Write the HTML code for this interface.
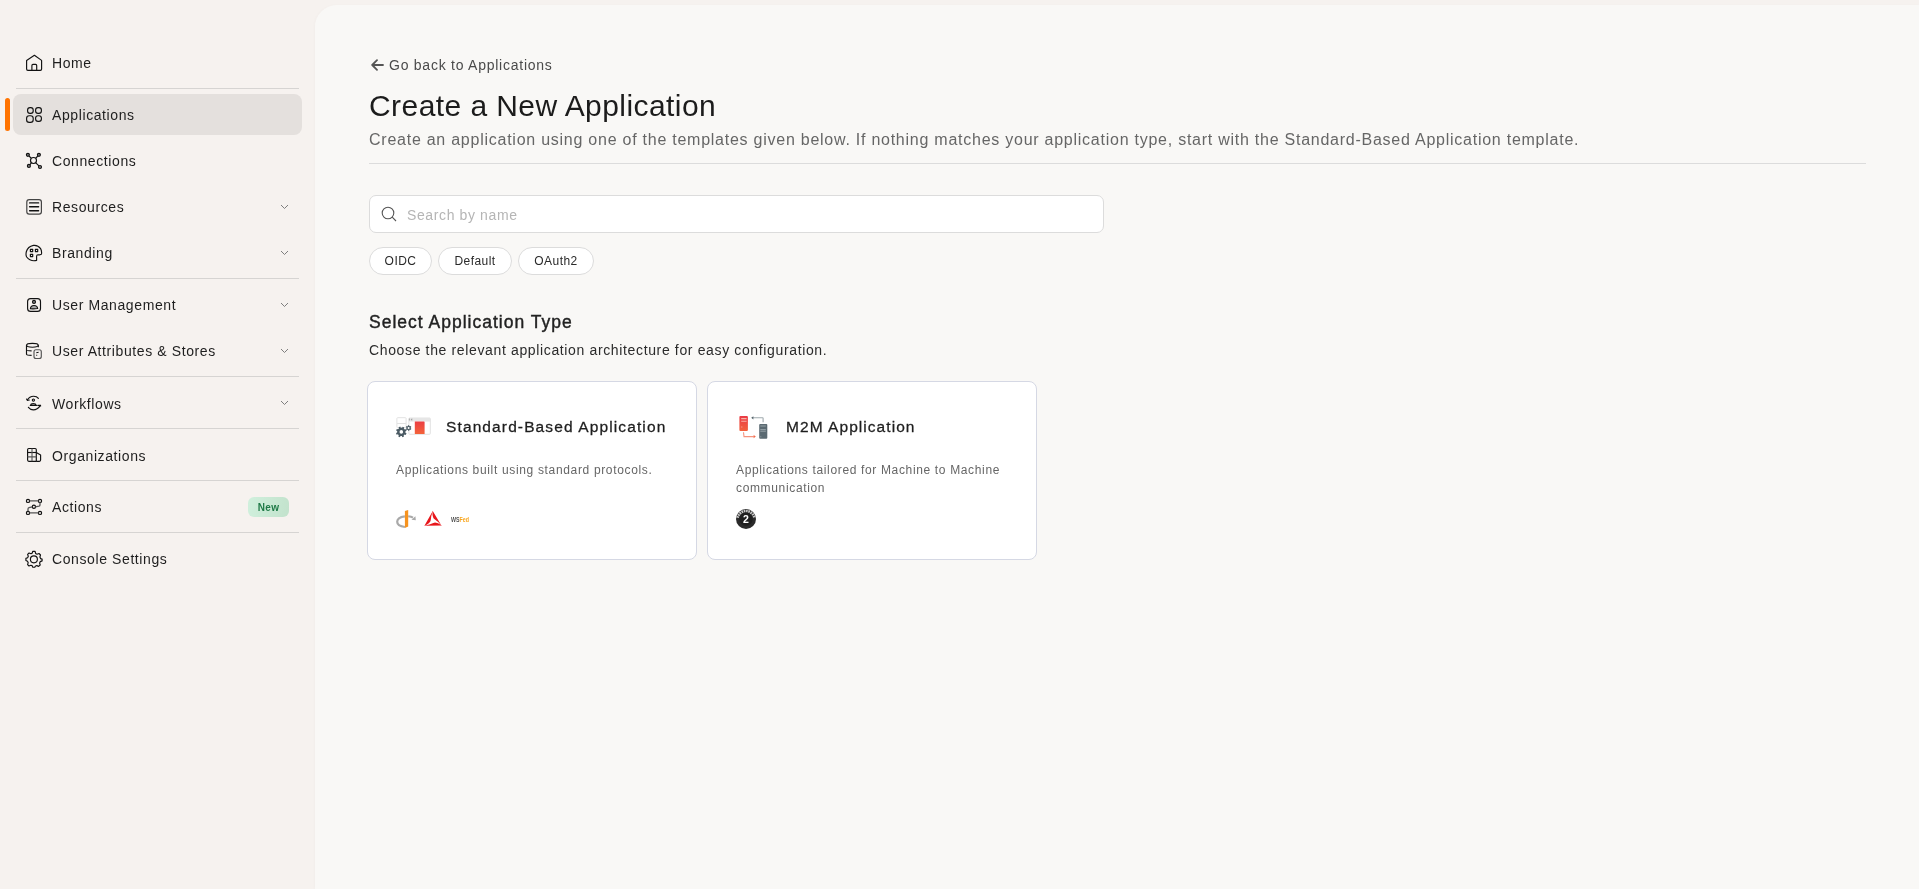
<!DOCTYPE html>
<html>
<head>
<meta charset="utf-8">
<style>
*{box-sizing:border-box;margin:0;padding:0}
html,body{width:1919px;height:889px;overflow:hidden}
body{background:#f6f2ef;font-family:"Liberation Sans",sans-serif;color:#1e1e1e;position:relative}
.abs{position:absolute;white-space:nowrap}
.t{position:absolute;white-space:nowrap;line-height:1}
/* sidebar */
.sel{position:absolute;left:13px;top:94px;width:289px;height:41px;border-radius:8px;background:#e4e0dd}
.bar{position:absolute;left:5px;top:98px;width:5px;height:33px;border-radius:3px;background:#ff7300}
.ico{position:absolute;left:22px;width:24px;height:24px}
.lbl{position:absolute;left:52px;font-size:14px;letter-spacing:0.6px;color:#1e1e1e;line-height:16px;white-space:nowrap}
.chev{position:absolute;left:280px;width:9px;height:6px}
.dv{position:absolute;left:16px;width:283px;height:1px;background:#d6d4d2}
.badge{position:absolute;left:248px;top:497px;width:41px;height:20px;border-radius:6px;background:linear-gradient(100deg,#d0f0dd,#c2e2cc);color:#1f7a47;font-weight:bold;font-size:10px;line-height:22.5px;text-align:center;letter-spacing:0.25px}
/* main */
.main{position:absolute;left:315px;top:5px;width:1604px;height:884px;background:#f9f8f6;border-top-left-radius:22px;box-shadow:-1px 0 3px rgba(0,0,0,0.02)}
.search{position:absolute;left:369px;top:195px;width:735px;height:38px;border:1px solid #dcdcdc;border-radius:7px;background:#fff}
.chip{position:absolute;top:247px;height:28px;border:1px solid #dcdcdc;border-radius:14px;background:#fff;font-size:12px;line-height:26px;text-align:center;color:#2a2a2a;letter-spacing:0.45px}
.card{position:absolute;top:381px;width:330px;height:179px;border:1px solid #d5d8e4;border-radius:8px;background:#fff}
</style>
</head>
<body>
<div id="wrap" style="position:absolute;left:0;top:0;width:1919px;height:889px;will-change:transform">
<!-- SIDEBAR -->
<svg class="ico" style="top:50px" viewBox="0 0 24 24" fill="none" stroke="#111" stroke-width="1.15" stroke-linejoin="round"><path d="M4.6 10.4L12.4 5.3L19.6 10.4V19Q19.6 20.3 18.3 20.3H5.9Q4.6 20.3 4.6 19Z"/><path d="M9.9 20.3V15.4Q9.9 14.3 11 14.3H13.6Q14.7 14.3 14.7 15.4V20.3"/></svg>
<div class="lbl" style="top:55px">Home</div>
<div class="dv" style="top:88px"></div>

<div class="sel"></div>
<div class="bar"></div>
<svg class="ico" style="top:103px" viewBox="0 0 24 24" fill="none" stroke="#111" stroke-width="1.15"><rect x="5.6" y="4.6" width="5.6" height="5.7" rx="2.4"/><rect x="13.6" y="4.6" width="5.8" height="5.7" rx="2.4"/><rect x="4.6" y="12.7" width="6.6" height="6.6" rx="2.6"/><rect x="13.6" y="12.7" width="5.8" height="5.7" rx="2.4"/></svg>
<div class="lbl" style="top:107px">Applications</div>

<svg class="ico" style="top:149px" viewBox="0 0 24 24" fill="none" stroke="#111" stroke-width="1.15"><circle cx="5.9" cy="5.8" r="1.5" fill="#888"/><circle cx="16.9" cy="5.8" r="1.5" fill="#888"/><circle cx="6.9" cy="16.9" r="1.5" fill="#888"/><circle cx="18" cy="18" r="1.5" fill="#888"/><circle cx="11.5" cy="11.5" r="3"/><path d="M7 7L9.4 9.4M15.8 7L13.6 9.4M8 15.8L9.4 13.6M16.9 16.9L13.6 13.6"/></svg>
<div class="lbl" style="top:153px">Connections</div>

<svg class="ico" style="top:195px" viewBox="0 0 24 24" fill="none" stroke="#111" stroke-width="1.1"><rect x="4.8" y="4.6" width="14.6" height="14.6" rx="2.4" stroke="#444" stroke-width="1.2"/><path d="M7.6 7.9H16.6M7.6 11.8H16.6M7.6 15.7H16.6" stroke-width="1.4" stroke-linecap="round"/></svg>
<div class="lbl" style="top:199px">Resources</div>
<svg class="chev" style="top:204px" viewBox="0 0 9 6" fill="none" stroke="#777" stroke-width="0.95"><path d="M1 1L4.5 4.5L8 1"/></svg>

<svg class="ico" style="top:241px" viewBox="0 0 24 24" fill="none" stroke="#111" stroke-width="1.15" stroke-linejoin="round"><path d="M14.6 19.4Q13.2 19.7 12 19.7Q7.5 19.7 4.7 16Q3.5 14 4.4 10.5Q5.7 5.8 11.5 4.4Q16 3.9 18.6 7.6Q19.9 9.8 19.5 12.9Q19.3 13.7 17.8 13.8H15.9Q14.6 13.9 14.6 15.2Z"/><rect x="8.4" y="8.3" width="2.3" height="2.3" stroke-width="1.2"/><rect x="13.4" y="8.3" width="2.3" height="2.3" stroke-width="1.2"/><rect x="8.4" y="13.3" width="2.3" height="2.3" stroke-width="1.2"/></svg>
<div class="lbl" style="top:245px">Branding</div>
<svg class="chev" style="top:250px" viewBox="0 0 9 6" fill="none" stroke="#777" stroke-width="0.95"><path d="M1 1L4.5 4.5L8 1"/></svg>
<div class="dv" style="top:278px"></div>

<svg class="ico" style="top:293px" viewBox="0 0 24 24" fill="none" stroke="#111" stroke-width="1.15"><rect x="5.6" y="5.6" width="12.9" height="12.8" rx="3"/><circle cx="12" cy="8.9" r="1.5" fill="#888"/><path d="M8.4 15.8Q8.6 12.5 12 12.5Q15.4 12.5 15.6 15.5Q12 16.2 8.4 15.8Z" fill="#aaa"/></svg>
<div class="lbl" style="top:297px">User Management</div>
<svg class="chev" style="top:302px" viewBox="0 0 9 6" fill="none" stroke="#777" stroke-width="0.95"><path d="M1 1L4.5 4.5L8 1"/></svg>

<svg class="ico" style="top:339px" viewBox="0 0 24 24" fill="none" stroke="#111" stroke-width="1.15"><ellipse cx="10.4" cy="6.3" rx="5.9" ry="1.9"/><path d="M4.5 6.3V15.2Q4.6 16.4 9.6 16.4M4.5 11.2Q4.6 11.8 9.6 11.8M16.3 6.3V8.3"/><rect x="12" y="10.7" width="7.3" height="8.8" rx="2" stroke="#555"/><path d="M14.3 13.8L16.6 13.3M14.2 16.3H15.2" stroke-width="1.1"/></svg>
<div class="lbl" style="top:343px">User Attributes &amp; Stores</div>
<svg class="chev" style="top:348px" viewBox="0 0 9 6" fill="none" stroke="#777" stroke-width="0.95"><path d="M1 1L4.5 4.5L8 1"/></svg>
<div class="dv" style="top:376px"></div>

<svg class="ico" style="top:391px" viewBox="0 0 24 24" fill="none" stroke="#111" stroke-width="1.15" stroke-linecap="round"><path d="M5.3 9Q7.5 5.2 11.6 5.2Q14.8 5.2 16.4 7.4"/><path d="M4.5 8L5.5 9.3L7.3 9"/><circle cx="11.4" cy="9.1" r="1.1"/><path d="M8.4 14.4Q8.8 12.6 11.2 12.6Q13.8 12.6 14.4 14.4Z"/><path d="M6.4 16.3Q8.4 18.8 11.3 18.8Q15.5 18.8 18.2 14.6"/><path d="M15.8 14.4H18.5L18.6 15"/></svg>
<div class="lbl" style="top:396px">Workflows</div>
<svg class="chev" style="top:400px" viewBox="0 0 9 6" fill="none" stroke="#777" stroke-width="0.95"><path d="M1 1L4.5 4.5L8 1"/></svg>
<div class="dv" style="top:428px"></div>

<svg class="ico" style="top:443px" viewBox="0 0 24 24" fill="none" stroke="#111" stroke-width="1.15" stroke-linejoin="round"><path d="M14.3 18.3H6.8Q5.6 18.3 5.6 17.1V6.7Q5.6 5.5 6.8 5.5H13.1Q14.3 5.5 14.3 6.7Z"/><path d="M5.6 9.5H14.3"/><path d="M10 5.5V18.3M5.6 13.9H14.3" stroke="#555" stroke-width="1.1"/><path d="M14.3 9.4L18.6 11.9V17.1Q18.6 18.3 17.4 18.3H14.3"/></svg>
<div class="lbl" style="top:448px">Organizations</div>
<div class="dv" style="top:480px"></div>

<svg class="ico" style="top:495px" viewBox="0 0 24 24" fill="none" stroke="#111" stroke-width="1.2"><circle cx="6" cy="5.9" r="1.6"/><circle cx="18" cy="5.9" r="1.6"/><circle cx="11.9" cy="11.8" r="1.6"/><circle cx="6" cy="17.9" r="1.6"/><circle cx="18" cy="17.9" r="1.6"/><path d="M7.6 5.9H16.4M7.6 17.9H16.4" stroke="#555" stroke-width="1.3"/><path d="M18 7.5V10Q18 11 17 11.2L13.5 11.8M10.3 11.8L7 12.6Q6 12.9 6 14V16.3" stroke="#555" stroke-width="1.3"/></svg>
<div class="lbl" style="top:499px">Actions</div>
<div class="badge">New</div>
<div class="dv" style="top:532px"></div>

<svg class="ico" style="top:547px" viewBox="0 0 24 24" fill="none" stroke="#111" stroke-width="1.15" stroke-linejoin="round"><path d="M10.7 4.4H13.1L13.6 6.4L15.1 7.2L17 6.5L18.5 8L17.9 10L18.6 11.6L20.1 12.1V13.9L18.3 14.6L17.6 16L18.2 18L16.6 19.4L14.8 18.6L13.3 19.3L12.8 20.2H10.8L10.3 18.9L8.9 18.3L7 19L5.6 17.6L6.2 15.7L5.5 14.2L3.9 13.4V11.4L5.6 10.8L6.3 9.3L5.6 7.4L7.1 6L9 6.7L10.3 6Z"/><circle cx="11.9" cy="12.3" r="3.5"/></svg>
<div class="lbl" style="top:551px">Console Settings</div>

<div class="main"></div>

<!-- MAIN CONTENT -->
<svg class="abs" style="left:371px;top:59px" width="13" height="12" viewBox="0 0 13 12" fill="none" stroke="#555" stroke-width="1.8" stroke-linecap="round" stroke-linejoin="round"><path d="M12 6H1.5M6 1.2L1.2 6L6 10.8"/></svg>
<div class="t" style="left:389px;top:58px;font-size:14px;letter-spacing:0.75px;color:#4a4a4a">Go back to Applications</div>

<div class="t" style="left:369px;top:91px;font-size:30px;letter-spacing:0.43px;color:#1c1c1c">Create a New Application</div>
<div class="t" style="left:369px;top:132px;font-size:16px;letter-spacing:0.75px;color:#666">Create an application using one of the templates given below. If nothing matches your application type, start with the Standard-Based Application template.</div>
<div class="abs" style="left:369px;top:163px;width:1497px;height:1px;background:#dcdcdc"></div>

<div class="search"></div>
<svg class="abs" style="left:381px;top:206px" width="16" height="16" viewBox="0 0 16 16" fill="none" stroke="#555" stroke-width="1.1"><circle cx="7" cy="7" r="5.8"/><path d="M11.2 11.2L15 15"/></svg>
<div class="t" style="left:407px;top:208px;font-size:14px;letter-spacing:0.62px;color:#b5b5b5">Search by name</div>

<div class="chip" style="left:369px;width:63px">OIDC</div>
<div class="chip" style="left:438px;width:74px">Default</div>
<div class="chip" style="left:518px;width:76px">OAuth2</div>

<div class="t" style="left:369px;top:314px;font-size:17.5px;letter-spacing:1.0px;color:#222;-webkit-text-stroke:0.4px #222">Select Application Type</div>
<div class="t" style="left:369px;top:343px;font-size:14px;letter-spacing:0.64px;color:#2b2b2b">Choose the relevant application architecture for easy configuration.</div>

<div class="card" style="left:367px"></div>
<div class="card" style="left:707px"></div>

<div class="t" style="left:446px;top:419px;font-size:15.5px;letter-spacing:1.12px;color:#1e1e1e;-webkit-text-stroke:0.28px #1e1e1e">Standard-Based Application</div>
<div class="t" style="left:396px;top:464px;font-size:12px;letter-spacing:0.66px;color:#666">Applications built using standard protocols.</div>

<div class="t" style="left:786px;top:419px;font-size:15.5px;letter-spacing:1.05px;color:#1e1e1e;-webkit-text-stroke:0.28px #1e1e1e">M2M Application</div>
<div class="t" style="left:736px;top:461px;font-size:12px;letter-spacing:0.65px;color:#666;line-height:18px">Applications tailored for Machine to Machine<br>communication</div>

<!-- card icons -->
<svg class="abs" style="left:392px;top:412px" width="44" height="30" viewBox="0 0 44 30">
<defs><linearGradient id="rg" x1="0" y1="0" x2="0" y2="1"><stop offset="0" stop-color="#ec3e43"/><stop offset="1" stop-color="#f3633a"/></linearGradient></defs>
<rect x="4.9" y="5.7" width="9.2" height="10" rx="0.8" fill="#fff" stroke="#e2e2e2" stroke-width="1"/>
<path d="M5 11.5H14" stroke="#e2e2e2" stroke-width="1"/>
<rect x="16.9" y="6" width="21.4" height="16.3" rx="0.8" fill="#fff" stroke="#e2e2e2" stroke-width="1"/>
<rect x="17" y="6" width="21.2" height="3.6" fill="#e6e6e6"/>
<path d="M17.4 6.5V8.5M19.2 7.8L19.8 6.8V8.6" stroke="#777" stroke-width="0.5" fill="none"/>
<path d="M22.8 9.6H32Q32.6 9.6 32.6 10.6V22H22.8Z" fill="url(#rg)"/>
<path d="M13.42 20.73 L14.53 21.26 L13.78 22.92 L12.65 22.43 L11.62 23.40 L12.03 24.56 L10.33 25.20 L9.88 24.06 L8.47 24.02 L7.94 25.13 L6.28 24.38 L6.77 23.25 L5.80 22.22 L4.64 22.63 L4.00 20.93 L5.14 20.48 L5.18 19.07 L4.07 18.54 L4.82 16.88 L5.95 17.37 L6.98 16.40 L6.57 15.24 L8.27 14.60 L8.72 15.74 L10.13 15.78 L10.66 14.67 L12.32 15.42 L11.83 16.55 L12.80 17.58 L13.96 17.17 L14.60 18.87 L13.46 19.32Z" fill="#4b5b64"/>
<circle cx="9.3" cy="19.9" r="1.8" fill="#fff"/>
<path d="M18.76 16.44 L19.39 16.78 L18.77 17.92 L18.14 17.57 L17.30 18.09 L17.32 18.81 L16.02 18.84 L16.01 18.12 L15.14 17.65 L14.53 18.03 L13.85 16.92 L14.47 16.54 L14.44 15.56 L13.81 15.22 L14.43 14.08 L15.06 14.43 L15.90 13.91 L15.88 13.19 L17.18 13.16 L17.19 13.88 L18.06 14.35 L18.67 13.97 L19.35 15.08 L18.73 15.46Z" fill="#4b5b64"/>
<circle cx="16.6" cy="16" r="1" fill="#fff"/>
</svg>

<svg class="abs" style="left:734px;top:410px" width="40" height="32" viewBox="0 0 40 32">
<defs><linearGradient id="rg2" x1="0" y1="0" x2="0" y2="1"><stop offset="0" stop-color="#ea3a45"/><stop offset="1" stop-color="#f2623d"/></linearGradient></defs>
<rect x="5.4" y="5.9" width="8.5" height="15" rx="1" fill="url(#rg2)"/>
<path d="M7.2 8.6H12.6M7.2 11.2H12.6" stroke="#f7b3a8" stroke-width="1.1"/>
<rect x="7.3" y="16.5" width="1" height="1" fill="#f7b3a8"/>
<rect x="25.2" y="14" width="8.1" height="14.8" rx="1" fill="#5b6a72"/>
<path d="M26.3 16H31.8M26.3 19.6H31.8M26.3 21.2H31.8" stroke="#97a3a8" stroke-width="1"/>
<rect x="26.3" y="26.3" width="1" height="1" fill="#97a3a8"/>
<path d="M18.8 7.7H28.6Q29.1 7.7 29.1 8.2V12.3" stroke="#a0aaae" stroke-width="1.1" fill="none"/>
<path d="M17.2 7.8L19.4 6.2V9.4Z" fill="#56656c"/>
<path d="M9.5 22.3L10 26.6H19.8" stroke="#f5937e" stroke-width="1.1" fill="none"/>
<path d="M21.8 26.6L19.6 25V28.2Z" fill="#f26a4a"/>
</svg>

<svg class="abs" style="left:392px;top:506px" width="84" height="26" viewBox="0 0 84 26">
<path d="M12.9 10.3Q5.2 11.3 5.2 15.8Q5.2 20.2 12.9 21" stroke="#a9a9a9" stroke-width="2.2" fill="none"/>
<path d="M16.2 10.2Q19.5 10.6 21 11.6" stroke="#a9a9a9" stroke-width="2" fill="none"/>
<path d="M19.5 13.8L23.8 14.3L23.4 10.3Z" fill="#a9a9a9"/>
<path d="M12.9 5L16.2 3.9V20.6L12.9 21.9Z" fill="#f7931e"/>
<path id="bl" d="M40.6 4.7L49.7 19.9Q45.8 15.2 42.6 13.3Q39.9 11.6 40.6 4.7Z" fill="#e8161b"/><use href="#bl" transform="rotate(120 40.9 14.8)"/><use href="#bl" transform="rotate(240 40.9 14.8)"/>
<text x="59" y="16.2" font-family="Liberation Sans" font-weight="bold" font-size="6.6" textLength="18" lengthAdjust="spacingAndGlyphs"><tspan fill="#555">WS</tspan><tspan fill="#f9a51c">Fed</tspan></text>
</svg>

<svg class="abs" style="left:734px;top:507px" width="24" height="24" viewBox="0 0 24 24">
<circle cx="12" cy="12" r="10" fill="#2a2a2a"/>
<path d="M3.6 10.8A8.6 8.6 0 0 1 20.4 10.8" stroke="#c8c8c8" stroke-width="2.6" fill="none" stroke-dasharray="1.6 0.7"/>
<circle cx="12" cy="12.2" r="6.6" fill="#1e1e1e"/>
<text x="12" y="15.8" text-anchor="middle" font-family="Liberation Sans" font-weight="bold" font-size="10.5" fill="#fff">2</text>
</svg>

</div>
</body>
</html>
